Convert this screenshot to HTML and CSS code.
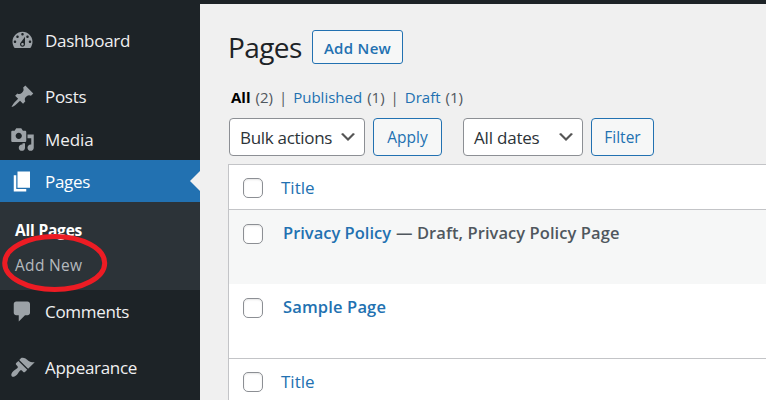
FILE: index.html
```html
<!DOCTYPE html>
<html lang="en">
<head>
<meta charset="utf-8">
<title>Pages</title>
<link rel="stylesheet" href="styles.css">
</head>
<body>
<div class="screen">
<nav class="sidebar">
  <a class="item"><svg viewBox="0 0 20 20"><path d="M3.76 16h12.48c1.1-1.37 1.76-3.11 1.76-5 0-4.42-3.58-8-8-8s-8 3.58-8 8c0 1.89.66 3.63 1.76 5zM10 4c.55 0 1 .45 1 1s-.45 1-1 1-1-.45-1-1 .45-1 1-1zM6 6c.55 0 1 .45 1 1s-.45 1-1 1-1-.45-1-1 .45-1 1-1zm8 0c.55 0 1 .45 1 1s-.45 1-1 1-1-.45-1-1 .45-1 1-1zm-5.37 5.55L12 7v6c0 1.1-.9 2-2 2s-2-.9-2-2c0-.57.24-1.08.63-1.45zM4 10c.55 0 1 .45 1 1s-.45 1-1 1-1-.45-1-1 .45-1 1-1zm12 0c.55 0 1 .45 1 1s-.45 1-1 1-1-.45-1-1 .45-1 1-1zm-5 3c0-.55-.45-1-1-1s-1 .45-1 1 .45 1 1 1 1-.45 1-1z"/></svg><span>Dashboard</span></a>
  <div class="separator"></div>
  <a class="item posts"><svg viewBox="0 0 20 20"><path d="M10.44 3.02l1.82-1.82 6.36 6.35-1.83 1.82c-1.05-.68-2.48-.57-3.41.36l-.75.75c-.92.93-1.04 2.35-.35 3.41l-1.83 1.82-2.41-2.41-2.8 2.79c-.42.42-3.38 2.71-3.8 2.29s1.86-3.39 2.28-3.81l2.79-2.79L4.1 9.36l1.83-1.82c1.05.69 2.48.57 3.4-.36l.75-.75c.93-.92 1.05-2.35.36-3.41z"/></svg><span>Posts</span></a>
  <a class="item media"><svg viewBox="0 0 20 20"><path d="M13 11V4c0-.55-.45-1-1-1h-1.67L9 1H5L3.67 3H2c-.55 0-1 .45-1 1v7c0 .55.45 1 1 1h10c.55 0 1-.45 1-1zM7 4.5c1.38 0 2.5 1.12 2.5 2.5S8.38 9.5 7 9.5 4.5 8.38 4.5 7 5.62 4.5 7 4.5zM14 6h5v10.5c0 1.38-1.12 2.5-2.5 2.5S14 17.88 14 16.5s1.12-2.5 2.5-2.5c.17 0 .34.02.5.05V9h-3V6zm-4 8.05V13h2v3.5c0 1.38-1.12 2.5-2.5 2.5S7 17.88 7 16.5 8.12 14 9.5 14c.17 0 .34.02.5.05z"/></svg><span>Media</span></a>
  <a class="item current"><svg viewBox="0 0 20 20"><path d="M6 15V2h10v13H6zm-1 1h8v2H3V5h2v11z"/></svg><span>Pages</span></a>
  <div class="submenu">
    <a class="sub active"><span>All Pages</span></a>
    <a class="sub"><span>Add New</span></a>
    <svg class="marker" viewBox="0 0 106 60"><ellipse cx="52.7" cy="30" rx="50" ry="26.6"/></svg>
  </div>
  <a class="item"><svg viewBox="0 0 20 20"><path d="M5 2h9c1.1 0 2 .9 2 2v7c0 1.1-.9 2-2 2h-2l-5 5v-5H5c-1.1 0-2-.9-2-2V4c0-1.1.9-2 2-2z"/></svg><span>Comments</span></a>
  <div class="separator"></div>
  <a class="item"><svg viewBox="0 0 20 20"><path d="M14.48 11.06L7.41 3.99l1.5-1.5c.5-.56 2.3-.47 3.51.32 1.21.8 1.43 1.28 2.91 2.1 1.18.64 2.45 1.26 4.45.85zm-.71.71L6.7 4.7 4.93 6.47c-.39.39-.39 1.02 0 1.41l1.06 1.06c.39.39.39 1.03 0 1.42-.6.6-1.43 1.11-2.21 1.69-.35.26-.7.53-1.01.84C1.43 14.23.4 16.08 1.4 17.07c.99 1 2.84-.03 4.18-1.36.31-.31.58-.66.85-1.02.57-.78 1.08-1.61 1.69-2.21.39-.39 1.02-.39 1.41 0l1.06 1.06c.39.39 1.02.39 1.41 0z"/></svg><span>Appearance</span></a>
</nav>
<main class="content">
  <header class="heading"><h1>Pages</h1><a class="button add">Add New</a></header>
  <div class="filters"><b>All</b><i>(2)</i><em>|</em><a>Published</a><i>(1)</i><em>|</em><a>Draft</a><i>(1)</i></div>
  <div class="actions">
    <div class="select bulk"><span>Bulk actions</span><svg viewBox="0 0 20 20"><path d="M5 6l5 5 5-5 2 1-7 7-7-7 2-1z"/></svg></div>
    <a class="button apply">Apply</a>
    <div class="select dates"><span>All dates</span><svg viewBox="0 0 20 20"><path d="M5 6l5 5 5-5 2 1-7 7-7-7 2-1z"/></svg></div>
    <a class="button filter">Filter</a>
  </div>
  <div class="table">
    <div class="row head"><span class="check"></span><a>Title</a></div>
    <div class="row body alt"><span class="check"></span><p><a>Privacy Policy</a><span class="state">— Draft, Privacy Policy Page</span></p></div>
    <div class="row body"><span class="check"></span><p><a class="sample">Sample Page</a></p></div>
    <div class="row foot"><span class="check"></span><a>Title</a></div>
  </div>
</main>
</div>
</body>
</html>
```
FILE: styles.css
```css
* { box-sizing: border-box; }
body {
  margin: 0;
  height: 401px;
  overflow: hidden;
  background: #fff;
  color: #2c3338;
  font-family: "Open Sans", "Noto Sans", sans-serif;
  font-size: 16px;
}
.screen { display: flex; width: 766px; height: 400px; overflow: hidden; background: #1d2327; padding-top: 4px; }
span, a, b, i, em { white-space: nowrap; }

.sidebar { width: 200px; flex: none; padding-top: 15px; background: #1d2327; }
.item { display: flex; align-items: center; height: 42px; padding-left: 10px; gap: 10px; color: #f0f0f1; font-size: 17px; letter-spacing: -.3px; position: relative; }
.item svg { width: 25px; height: 25px; fill: #9ca2a7; flex: none; }
.posts { height: 43px; padding-bottom: 1px; }
.media { letter-spacing: -.1px; }
.separator { height: 14px; }
.current { background: #2271b1; color: #fff; }
.current svg { fill: #fff; }
.current::after { content: ""; position: absolute; right: 0; top: 11px; border: 10px solid transparent; border-left: 0; border-right-color: #f0f0f0; }
.submenu { position: relative; height: 88px; padding-top: 10px; background: #2c3338; }
.sub { display: flex; align-items: center; height: 35px; padding-left: 15px; color: #b4b9be; font-size: 15.5px; letter-spacing: .3px; }
.active { color: #fff; font-weight: 700; letter-spacing: -.2px; }
.marker { position: absolute; left: 2px; top: 31px; width: 106px; height: 60px; z-index: 1; fill: none; stroke: #ed1c24; stroke-width: 5; }

.content { flex: 1; min-width: 0; background: #f0f0f0; padding-left: 28px; }
.heading { display: flex; align-items: center; margin-top: 26px; height: 34px; }
h1 { margin: 0; width: 84px; font-size: 28px; font-weight: 400; line-height: 34px; letter-spacing: -.6px; color: #1d2327; }
.button { display: flex; align-items: center; justify-content: center; border: 1px solid #2271b1; border-radius: 4px; background: #f6f7f7; color: #2271b1; font-size: 15.5px; }
.add { width: 91px; height: 34px; padding-top: 1px; font-weight: 600; font-size: 15px; letter-spacing: .3px; border-radius: 3px; }
.filters { display: flex; align-items: center; height: 24px; margin: 21px 0 0 3px; font-size: 15px; color: #50575e; }
.filters b { color: #000; }
.filters a { color: #2271b1; }
.filters i, .filters em { font-style: normal; }
.filters i { margin-left: 5px; }
.filters em { margin: 0 6px; }
.actions { display: flex; height: 38px; margin: 9px 0 0 1px; }
.select { display: flex; align-items: center; justify-content: space-between; height: 38px; border: 1px solid #8c8f94; border-radius: 4px; background: #fff; font-size: 17px; letter-spacing: -.2px; padding: 0 6px 0 10px; }
.select svg { flex: none; width: 20px; height: 20px; fill: #555; }
.bulk { width: 136px; letter-spacing: -.3px; }
.apply { width: 69px; margin-left: 8px; }
.dates { width: 120px; margin-left: 21px; }
.filter { width: 63px; margin-left: 8px; }
.table { margin-top: 8px; border: 1px solid #c3c4c7; border-right: 0; background: #fff; height: 260px; }
.row { display: flex; }
.check { flex: none; width: 20px; height: 20px; margin-left: 14px; border: 1px solid #8c8f94; border-radius: 5px; background: #fff; box-shadow: inset 0 1px 2px rgba(0,0,0,.1); }
.row a { color: #2271b1; }
.head, .foot { align-items: center; height: 45px; font-size: 17px; }
.head .check, .foot .check { margin-top: 2px; }
.head a, .foot a { margin-left: 18px; }
.head { border-bottom: 1px solid #c3c4c7; }
.foot { border-top: 1px solid #c3c4c7; }
.body { height: 74px; padding-top: 14px; font-size: 16.5px; font-weight: 600; color: #50575e; }
.alt { background: #f6f7f7; }
.body p { display: flex; gap: 5px; margin: -1px 0 0 20px; line-height: 20px; }
.state { letter-spacing: .07px; }
.sample { letter-spacing: .15px; }
```
